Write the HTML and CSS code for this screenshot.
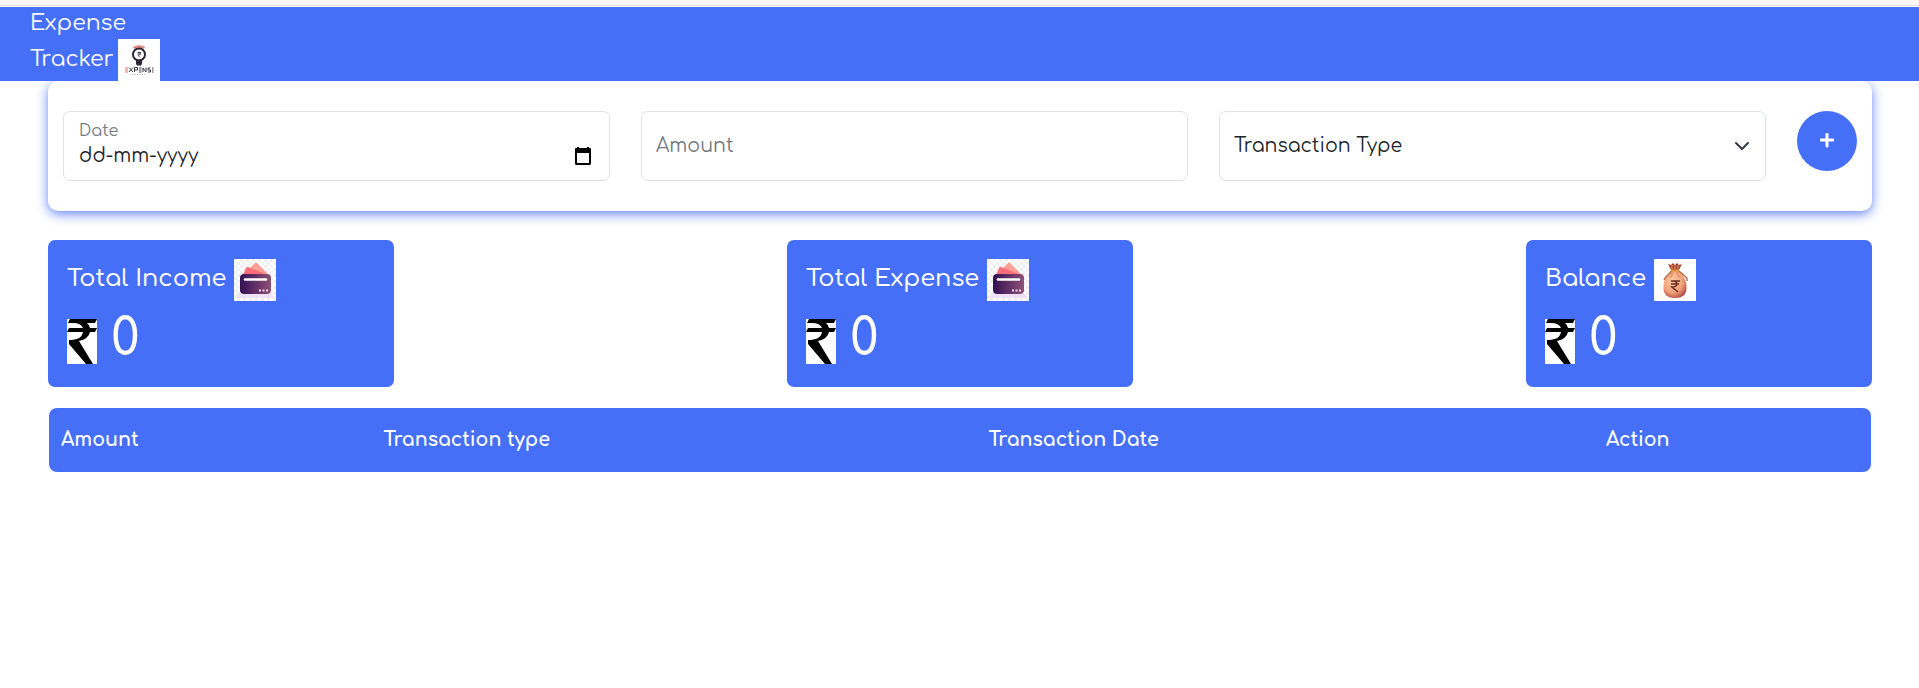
FILE: index.html
```
<!DOCTYPE html>
<html lang="en">
<head>
<meta charset="utf-8">
<meta name="viewport" content="width=device-width, initial-scale=1">
<title>Expense Tracker</title>
<link rel="stylesheet" href="styles.css">
</head>
<body>
<svg class="sprite" aria-hidden="true">
  <defs>
    <linearGradient id="walletFill" x1="0" x2="1" y1="0" y2="0"><stop offset="0" stop-color="#321052"/><stop offset="1" stop-color="#8f5078"/></linearGradient>
    <radialGradient id="bagFill" cx=".4" cy=".35" r=".75"><stop offset="0" stop-color="#ffc9a0"/><stop offset=".6" stop-color="#f0a07a"/><stop offset="1" stop-color="#a83c38"/></radialGradient>
    <pattern id="checks" width="6" height="6" patternUnits="userSpaceOnUse"><path d="M0 0h6v6H0z" fill="#fff"/><path d="M0 0h3v3H0zM3 3h3v3H3z" fill="#efefef"/></pattern>
  </defs>
  <symbol id="wallet" viewBox="0 0 42 42">
    <path d="M0 0h42v42H0z" fill="url(#checks)"/>
    <path d="M4 35h34l3 4H3z" fill="#eee0fa"/>
    <path d="M15 10l6-6q1-1 2 0l11 11v2H15z" fill="#ff9f96"/>
    <path d="M9 16l3-7q.7-1.500 2-1l20 8v2H9z" fill="#ff6d78"/>
    <rect x="6" y="15" width="31" height="20" rx="4" fill="url(#walletFill)"/>
    <path d="M11 20.500h21" stroke="#fff" stroke-width="2.600" stroke-linecap="round"/>
    <path d="M25 31.500h2M28.500 31.500h2M32 31.500h2" stroke="#f3d9e8" stroke-width="2"/>
  </symbol>
  <symbol id="bag" viewBox="0 0 42 42">
    <path d="M0 0h42v42H0z" fill="#fff"/>
    <path d="M17 12C11 17 9.500 23 9.500 29q0 10 11.500 10t11.500-10c0-6-2-12-7.500-17z" fill="url(#bagFill)"/>
    <path d="M14 5l3 1 2-2 2 2 2-2 2 2 3-1-3 6h-8z" fill="#a84838"/>
    <path d="M18 6v4M21 5v5M24 6v4" stroke="#e09068"/>
    <path d="M17 11.500h8" stroke="#e8923c" stroke-width="2.200"/>
    <path d="M17 12c-1 4-5 4-7 9M25 12l8 7v3" fill="none" stroke="#b56434" stroke-width="1.300"/>
    <path d="M18 13c0 3 0 4-2 6M23 13c0 2 1 3 2 5" fill="none" stroke="#d07c60"/>
    <path d="M17 22h9M17 25h8M18 22c7 0 6 6 0 6l6 5" fill="none" stroke="#6d3026" stroke-width="1.600"/>
  </symbol>
  <symbol id="rupee" viewBox="0 0 30 45">
    <path d="M0 0h30v45H0z" fill="#fff"/>
    <path d="M3 0h27l-2 4h-8q2.500 2 3 5h7l-2 4h-5q-1.500 7-11 9l14 23h-7L2 25v-4c8 0 13-2 14-8H0l2-4h14q-2-5-10-5H1z" fill="#000"/>
  </symbol>
  <symbol id="logo" viewBox="0 0 42 42">
    <path d="M0 0h42v42H0z" fill="#fff"/>
    <path d="M15.500 9q5.500-3 11 0" fill="none" stroke="#e8837e" stroke-width="2.500"/>
    <circle cx="21" cy="15.500" r="6" fill="#fff" stroke="#2b2736" stroke-width="2"/>
    <path d="M18 20.500h6v4.500l-1 1.500h-4L18 25z" fill="#2b2736"/>
    <path d="M19.500 13.500h3.500M19.500 15h3.500M20 13.500c3 0 3 2.800 0 2.800l2 2" fill="none" stroke="#2b2736" stroke-width=".8"/>
    <path d="M7 29h3M7 31h3M7 33h3" stroke="#e8706c"/>
    <path d="M11 28.500l4 4.500M15 28.500L11 33M16.500 33v-4.500h3v2.500h-3M21 29h2.500M21 31h2.500M21 33h2.500M25 33v-4l3 4v-4.500M32.500 29H30v2h2.500v2H30M34 29h1.500M34 31h1.500M34 33h1.500" fill="none" stroke="#3c3846"/>
    <path d="M14 35.500h15" stroke="#a9a7ae" stroke-dasharray="1 1.500"/>
  </symbol>
</svg>
<div class="strip"></div>
<nav class="navbar">
  <a class="brand" href="#"><span>Expense</span><span class="brand-row">Tracker <svg class="icon" role="img" aria-label="Logo"><use href="#logo"/></svg></span></a>
</nav>
<main class="page">
  <form class="entry">
    <label class="field date-field">
      <span class="caption">Date</span>
      <span class="date-row">
        <input class="bare" type="text" aria-label="Date" value="dd-mm-yyyy">
        <svg class="calendar" viewBox="0 0 16 18" aria-hidden="true"><path d="M2 0h2v1h8V0h2v1h1q1 0 1 1v14q0 2-1 2H1q-1 0-1-2V2q0-1 1-1h1zM2 6v10h12V6z" fill="#000" fill-rule="evenodd"/></svg>
      </span>
    </label>
    <input class="field" type="text" placeholder="Amount" aria-label="Amount">
    <select class="field select" aria-label="Transaction Type"><option>Transaction Type</option><option>Income</option><option>Expense</option></select>
    <button class="add" type="button" aria-label="Add transaction"><svg viewBox="0 0 14 16" aria-hidden="true"><path d="M7 1v12M1 7h12" stroke="#fff" stroke-width="3" stroke-linecap="round"/></svg></button>
  </form>
  <section class="cards">
    <article class="card">
      <h2 class="card-title">Total Income <svg class="icon" aria-hidden="true"><use href="#wallet"/></svg></h2>
      <p class="amount"><svg class="rupee" role="img" aria-label="Rupees"><use href="#rupee"/></svg>0</p>
    </article>
    <article class="card">
      <h2 class="card-title">Total Expense <svg class="icon" aria-hidden="true"><use href="#wallet"/></svg></h2>
      <p class="amount"><svg class="rupee" role="img" aria-label="Rupees"><use href="#rupee"/></svg>0</p>
    </article>
    <article class="card">
      <h2 class="card-title">Balance <svg class="icon" aria-hidden="true"><use href="#bag"/></svg></h2>
      <p class="amount"><svg class="rupee" role="img" aria-label="Rupees"><use href="#rupee"/></svg>0</p>
    </article>
  </section>
  <table class="records">
    <thead><tr><th class="c-amount">Amount</th><th class="c-type">Transaction type</th><th class="c-date">Transaction Date</th><th>Action</th></tr></thead>
  </table>
</main>
</body>
</html>
```
FILE: styles.css
```
:root {
  --blue: #466ff8;
}
* {
  box-sizing: border-box;
}
body {
  margin: 0;
  background: #fff;
  color: #212529;
  font-family: Comfortaa, Quicksand, Lato, sans-serif;
  font-size: 19px;
}
.sprite {
  position: absolute;
  width: 0;
  height: 0;
}
.strip {
  height: 6px;
  margin-bottom: 1px;
  background: #fff6f5;
  border-bottom: 1px solid #e6dedd;
}
.navbar {
  padding: 0 30px;
  background: var(--blue);
}
.brand {
  display: flex;
  flex-direction: column;
  color: #fff;
  font-size: 22px;
  line-height: 32px;
  text-decoration: none;
}
.brand-row {
  display: flex;
  gap: 4px;
  line-height: 40px;
}
.icon {
  width: 42px;
  height: 42px;
  flex: none;
}
.page {
  padding: 0 47px 0 48px;
}
.entry {
  display: grid;
  grid-template-columns: repeat(3, minmax(0, 1fr)) 60px;
  gap: 31px;
  padding: 30px 15px;
  border-radius: 10px;
  background: #fff;
  box-shadow: 0 3px 12px rgba(70, 111, 248, .85);
  clip-path: inset(0 -30px -30px -30px);
}
.field {
  width: 100%;
  min-width: 0;
  height: 70px;
  padding: 0 14px 2px;
  border: 1px solid #dee2e6;
  border-radius: 7px;
  background-color: #fff;
  color: #212529;
  font: inherit;
}
.field::placeholder {
  color: #757a7f;
  opacity: 1;
}
.date-field {
  display: flex;
  flex-direction: column;
  padding: 8px 18px 0 15px;
}
.caption {
  color: #757a7f;
  font-size: 16px;
  line-height: 23px;
}
.date-row {
  display: flex;
  align-items: center;
}
.bare {
  flex: 1;
  min-width: 0;
  padding: 0;
  border: 0;
  background: none;
  color: inherit;
  font: inherit;
  line-height: 26px;
}
.calendar {
  width: 16px;
  height: 18px;
}
.select {
  appearance: none;
  background-image: url("data:image/svg+xml,%3Csvg xmlns='http://www.w3.org/2000/svg' viewBox='0 0 16 16'%3E%3Cpath fill='none' stroke='%23343a40' stroke-linecap='round' stroke-linejoin='round' stroke-width='2' d='m2 5 6 6 6-6'/%3E%3C/svg%3E");
  background-repeat: no-repeat;
  background-position: right 15px center;
  background-size: 16px 16px;
}
.add {
  display: grid;
  place-items: center;
  width: 60px;
  height: 60px;
  padding: 0;
  border: 0;
  border-radius: 50%;
  background: var(--blue);
}
.add svg {
  width: 14px;
  height: 16px;
}
.cards {
  display: grid;
  grid-template-columns: repeat(3, 346px);
  justify-content: space-between;
  margin-top: 29px;
}
.card {
  min-height: 147px;
  padding: 19px;
  border-radius: 7px;
  background: var(--blue);
  color: #fff;
}
.card-title {
  display: flex;
  gap: 8px;
  margin: 0;
  font-size: 24px;
  font-weight: 500;
  line-height: 40px;
}
.amount {
  display: flex;
  gap: 14px;
  margin: 18px 0 0;
  font-size: 50px;
  font-weight: 500;
  line-height: 40px;
}
.rupee {
  width: 30px;
  height: 45px;
}
.records {
  width: calc(100% - 2px);
  margin: 21px 1px 0;
  border-spacing: 0;
  border-radius: 8px;
  background: var(--blue);
  color: #fff;
  table-layout: fixed;
}
.records th {
  height: 64px;
  padding: 0 12px;
  font-size: 19px;
  font-weight: 700;
  line-height: 24px;
  text-align: left;
}
.c-amount {
  width: 17.7%;
}
.c-type {
  width: 33.2%;
}
.c-date {
  width: 33.9%;
}
```
